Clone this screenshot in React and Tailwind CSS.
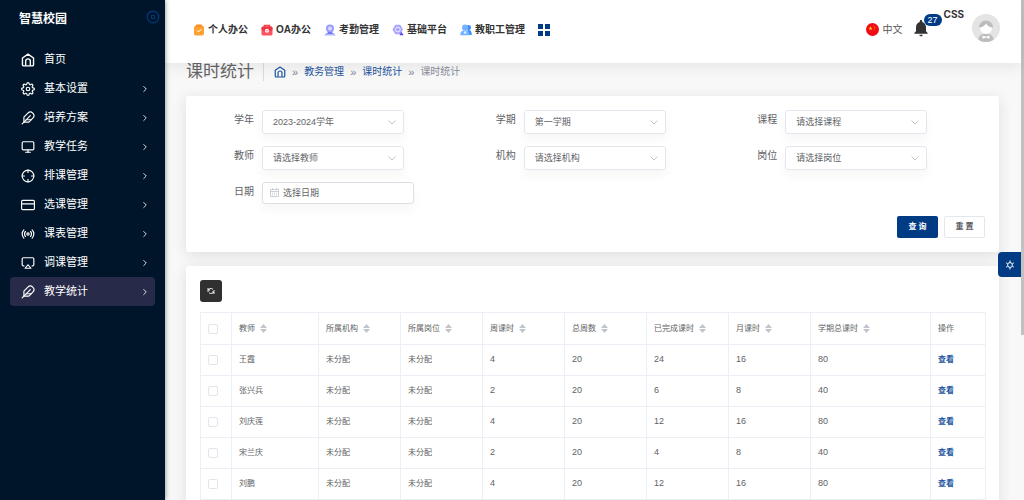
import {
  FiAirplay,
  FiChevronRight,
  FiCreditCard,
  FiCrosshair,
  FiDisc,
  FiFeather,
  FiMonitor,
  FiRadio,
  FiSettings,
} from "react-icons/fi";
import { MdNotifications } from "react-icons/md";

function HomeIcon({ className }) {
  return (
    <svg
      viewBox="0 0 24 24"
      fill="none"
      stroke="currentColor"
      strokeWidth="2.4"
      strokeLinejoin="round"
      className={className}
      aria-hidden="true"
    >
      <path d="M2.5 8.5 12 2l9.5 6.5V20a2 2 0 0 1-2 2h-15a2 2 0 0 1-2-2z" />
      <path d="M8 22v-8a4 4 0 0 1 8 0v8" />
    </svg>
  );
}

function TaskIcon() {
  return (
    <svg viewBox="0 0 12 12" className="h-3 w-3" aria-hidden="true">
      <rect x="1" y="1.5" width="10" height="10" rx="2" fill="#ffa033" />
      <rect x="3" y="0.5" width="6" height="2" rx="1" fill="#f78a1d" />
      <path d="m4 6.5 1.5 1.5L8.5 5" fill="none" stroke="#fff" strokeWidth="1" />
    </svg>
  );
}

function OaIcon() {
  return (
    <svg viewBox="0 0 12 12" className="h-3 w-3" aria-hidden="true">
      <path d="M3.5 3V1.5h5V3" fill="none" stroke="#f5414c" strokeWidth="1.5" />
      <rect x="0.5" y="2.5" width="11" height="9" rx="1.5" fill="#fb5560" />
      <rect x="0.5" y="2.5" width="11" height="4" rx="1.5" fill="#f03542" />
      <circle cx="6" cy="6.8" r="2" fill="#fff" />
      <circle cx="6" cy="6.8" r="0.7" fill="#fb5560" />
    </svg>
  );
}

function AttendanceIcon() {
  return (
    <svg viewBox="0 0 12 12" className="h-3 w-3" aria-hidden="true">
      <circle cx="6" cy="4.5" r="4" fill="#9a9cfb" />
      <circle cx="6" cy="4.5" r="2" fill="#d9daff" />
      <path d="M0.5 11.5c0-2 2-3 5.5-3s5.5 1 5.5 3z" fill="#b4b5fd" />
      <path d="M4 8h4l1 2H3z" fill="#7476f5" />
    </svg>
  );
}

function PlatformIcon() {
  return (
    <svg viewBox="0 0 12 12" className="h-3 w-3" aria-hidden="true">
      <path d="M3.3 0.8h5L11 5.5l-2.7 4.7h-5L0.5 5.500z" fill="#a9a5fc" />
      <circle cx="5.8" cy="5.5" r="2.4" fill="#a9a5fc" stroke="#fff" strokeWidth="0.8" />
      <path d="M7.500 11.300 9.300 7.800l2.400 3.500z" fill="#5a45f0" />
    </svg>
  );
}

function StaffIcon() {
  return (
    <svg viewBox="0 0 12 12" className="h-3 w-3" aria-hidden="true">
      <circle cx="8.5" cy="3.5" r="2.5" fill="#3f8cff" />
      <path d="M6 11c0-3 1-5 3-5s2.800 2 2.800 5z" fill="#3f8cff" />
      <circle cx="5" cy="3.5" r="3" fill="#74b5ff" />
      <path d="M0.2 11.2c0-3.500 1.800-5 4.800-5s4.500 1.500 4.500 5z" fill="#74b5ff" />
      <circle cx="5" cy="8.5" r="1.2" fill="#e3f0ff" />
    </svg>
  );
}

function FlagIcon() {
  return (
    <svg viewBox="0 0 13 13" className="h-[13px] w-[13px]" aria-hidden="true">
      <circle cx="6.5" cy="6.5" r="6.5" fill="#ee0a16" />
      <path
        d="m4.500 3.200.6 1.500h1.500l-1.200 1 .5 1.500-1.400-.9-1.400.9.500-1.500-1.200-1h1.500z"
        fill="#ffd500"
      />
      <path
        d="M7.500 2.800c1.600.7 1.900 3.200 0 4.400"
        fill="none"
        stroke="#f9a800"
        strokeWidth="0.8"
        strokeDasharray="1 .6"
      />
    </svg>
  );
}

function AvatarIcon() {
  return (
    <svg viewBox="0 0 28 28" className="h-7 w-7" aria-hidden="true">
      <circle cx="14" cy="14" r="14" fill="#e4e4e4" />
      <path d="M6.500 25.800c0-4 3-6.300 7.500-6.300s7.500 2.300 7.500 6.300a14 14 0 0 1-15 0z" fill="#bdbdbd" />
      <circle cx="14" cy="14" r="6" fill="#fff" />
      <path d="M7 13.500a7 7 0 0 1 14 0c-3 0-5.500-1.500-7-4-1.500 2.500-4 4-7 4z" fill="#bdbdbd" />
      <path d="m10.500 21.500 3.500 1.200 3.500-1.200v3.200L14 23.500l-3.500 1.200z" fill="#fff" />
    </svg>
  );
}

function SortIcon() {
  return (
    <svg viewBox="0 0 7 9" className="h-[9px] w-[7px]" fill="#c0c4cc" aria-hidden="true">
      <path d="M3.500 0 7 4H0zM3.500 9 0 5h7z" />
    </svg>
  );
}

function DownIcon() {
  return (
    <svg
      viewBox="0 0 8 8"
      fill="none"
      stroke="#c0c4cc"
      className="pointer-events-none absolute top-2 right-2 h-2 w-2"
      aria-hidden="true"
    >
      <path d="m0.500 2.500 3.500 3.500 3.500-3.500" />
    </svg>
  );
}

const menu = [
  { label: "首页", icon: HomeIcon },
  { label: "基本设置", icon: FiSettings, more: true },
  { label: "培养方案", icon: FiFeather, more: true },
  { label: "教学任务", icon: FiMonitor, more: true },
  { label: "排课管理", icon: FiCrosshair, more: true },
  { label: "选课管理", icon: FiCreditCard, more: true },
  { label: "课表管理", icon: FiRadio, more: true },
  { label: "调课管理", icon: FiAirplay, more: true },
  { label: "教学统计", icon: FiFeather, more: true, active: true },
];

const topNav = [
  { label: "个人办公", icon: TaskIcon },
  { label: "OA办公", icon: OaIcon },
  { label: "考勤管理", icon: AttendanceIcon },
  { label: "基础平台", icon: PlatformIcon },
  { label: "教职工管理", icon: StaffIcon },
];

const filters = [
  { id: "year", label: "学年", value: "2023-2024学年" },
  { id: "term", label: "学期", value: "第一学期" },
  { id: "course", label: "课程", value: "请选择课程" },
  { id: "teacher", label: "教师", value: "请选择教师" },
  { id: "org", label: "机构", value: "请选择机构" },
  { id: "post", label: "岗位", value: "请选择岗位" },
];

const columns = [
  "教师",
  "所属机构",
  "所属岗位",
  "周课时",
  "总周数",
  "已完成课时",
  "月课时",
  "学期总课时",
];

const rows = [
  ["王霞", "未分配", "未分配", 4, 20, 24, 16, 80],
  ["张兴兵", "未分配", "未分配", 2, 20, 6, 8, 40],
  ["刘庆莲", "未分配", "未分配", 4, 20, 12, 16, 80],
  ["宋兰庆", "未分配", "未分配", 2, 20, 4, 8, 40],
  ["刘鹏", "未分配", "未分配", 4, 20, 12, 16, 80],
];

function Sidebar() {
  return (
    <aside className="z-30 w-[165px] shrink-0 bg-[#001529] text-white shadow-[0_0_5px_rgba(0,21,41,0.5)]">
      <div className="flex h-[38px] items-center justify-between pr-[5px] pl-[19px]">
        <span className="text-[12px] font-bold">智慧校园</span>
        <button type="button" aria-label="收起菜单" className="pb-1 text-[#003b84]">
          <FiDisc className="h-[14px] w-[14px]" />
        </button>
      </div>
      <nav className="px-[10px] pt-[7px]">
        {menu.map(({ label, icon: Icon, more, active }) => (
          <a
            key={label}
            href="#"
            className={`flex h-[29px] items-center gap-[9px] rounded pr-[5px] pl-[11px] text-[11px] ${
              active ? "bg-[#282a4a]" : ""
            }`}
          >
            <Icon className="h-[14px] w-[14px]" />
            <span className="flex-1">{label}</span>
            {more && <FiChevronRight className="h-[10px] w-[10px]" />}
          </a>
        ))}
      </nav>
    </aside>
  );
}

function Header() {
  return (
    <header className="z-20 flex h-[63px] shrink-0 items-center justify-between bg-white pr-[21px] pb-1 pl-7 shadow-[0_4px_14px_rgba(0,0,0,0.08)]">
      <nav className="flex items-center gap-[13px]">
        {topNav.map(({ label, icon: Icon }) => (
          <a
            key={label}
            href="#"
            className="flex items-center gap-[3px] text-[10px] font-bold text-[#333]"
          >
            <Icon />
            {label}
          </a>
        ))}
        <button type="button" aria-label="全部应用" className="text-[#003b84]">
          <svg viewBox="0 0 12 12" className="h-3 w-3" fill="currentColor">
            <path d="M0 0h5v5H0zM7 0h5v5H7zM0 7h5v5H0zM7 7h5v5H7z" />
          </svg>
        </button>
      </nav>
      <div className="flex items-center">
        <button type="button" className="flex items-center gap-1 text-[10px] text-[#555]">
          <FlagIcon />
          中文
        </button>
        <button type="button" aria-label="通知" className="relative mb-1 ml-2 text-[#333]">
          <MdNotifications className="h-5 w-5" />
          <span className="absolute -top-1 left-[13px] rounded-full bg-[#003b84] px-1 text-[9px] leading-3 text-white">
            27
          </span>
        </button>
        <span className="mb-8 ml-[13px] font-['Inter',sans-serif] text-[10px] leading-3 font-bold text-[#333]">
          CSS
        </span>
        <button type="button" aria-label="个人中心" className="mb-1 ml-2">
          <AvatarIcon />
        </button>
      </div>
    </header>
  );
}

function Breadcrumb() {
  return (
    <div className="flex items-center pb-[15px] leading-[18px]">
      <h1 className="text-[17px] text-[#666]">课时统计</h1>
      <nav className="ml-[9px] flex items-center gap-[6px] border-l border-[#d6dce1] pl-[10px] text-[10px] text-[#1d56a0]">
        <a href="#" aria-label="首页">
          <HomeIcon className="h-3 w-3" />
        </a>
        <span className="text-[11px] text-[#7d8594]">»</span>
        <a href="#">教务管理</a>
        <span className="text-[11px] text-[#7d8594]">»</span>
        <a href="#">课时统计</a>
        <span className="text-[11px] text-[#7d8594]">»</span>
        <span className="text-[#8a8f9c]">课时统计</span>
      </nav>
    </div>
  );
}

function FilterForm() {
  return (
    <form className="rounded-[3px] bg-white p-[14px] shadow-[0_3px_14px_rgba(34,41,60,0.12)]">
      <div className="grid grid-cols-3 gap-y-3 text-[#606266]">
        {filters.map((item) => (
          <div key={item.id} className="flex gap-2">
            <label htmlFor={item.id} className="w-[54px] text-right text-[10px] leading-5">
              {item.label}
            </label>
            <div className="relative w-[142px]">
              <select
                id={item.id}
                className="block h-6 w-full appearance-none rounded-[3px] border border-[#e4e7ed] bg-white pt-px pl-[10px] text-[9px] shadow-[0_6px_10px_rgba(60,40,60,0.04)]"
              >
                <option>{item.value}</option>
              </select>
              <DownIcon />
            </div>
          </div>
        ))}
        <div className="flex gap-2">
          <label htmlFor="date" className="w-[54px] text-right text-[10px] leading-5">
            日期
          </label>
          <div className="relative w-[152px]">
            <input
              id="date"
              type="text"
              placeholder="选择日期"
              className="block h-[22px] w-full rounded-[3px] border border-[#dcdfe6] bg-white pl-5 text-[9px] shadow-[0_6px_10px_rgba(60,40,60,0.04)] placeholder:text-[#606266]"
            />
            <svg
              viewBox="0 0 9 9"
              fill="none"
              stroke="#c0c4cc"
              strokeWidth="0.8"
              className="pointer-events-none absolute top-[6px] left-2 h-[9px] w-[9px]"
              aria-hidden="true"
            >
              <path d="M0.500 1.500h8v7h-8zM0.500 3.500h8M2.500 0v2M6.500 0v2M2 5.300h1M4 5.300h1M6 5.300h1M2 7h1M4 7h1M6 7h1" />
            </svg>
          </div>
        </div>
      </div>
      <div className="mt-3 flex justify-end gap-[6px] text-[8px] font-bold">
        <button type="submit" className="h-[22px] w-[41px] rounded-xs bg-[#003b84] text-white">
          查 询
        </button>
        <button
          type="reset"
          className="h-[22px] w-[41px] rounded-xs border border-[#e4e7ed] bg-white text-[#606266]"
        >
          重 置
        </button>
      </div>
    </form>
  );
}

function HoursTable() {
  return (
    <section className="rounded-[3px] bg-white p-[14px] shadow-[0_3px_14px_rgba(34,41,60,0.12)]">
      <button
        type="button"
        aria-label="刷新"
        className="mb-[10px] flex h-[22px] w-[22px] items-center justify-center rounded-[3px] bg-[#303030] text-white"
      >
        <svg
          viewBox="0 0 8 8"
          className="h-2 w-2"
          fill="none"
          stroke="currentColor"
          strokeWidth="0.9"
          aria-hidden="true"
        >
          <path d="M1 5V3.500a3 2.500 0 0 1 5-1.300M7 3v1.500a3 2.500 0 0 1-5 1.300" />
          <path d="M1 1v2h2M7 7V5H5" />
        </svg>
      </button>
      <table className="w-full table-fixed border-collapse text-left text-[8px] text-[#606266]">
        <colgroup>
          <col className="w-[31px]" />
          <col className="w-[87px]" />
          <col className="w-[82px]" />
          <col className="w-[82px]" />
          <col className="w-[82px]" />
          <col className="w-[82px]" />
          <col className="w-[82px]" />
          <col className="w-[82px]" />
          <col className="w-[120px]" />
          <col className="w-[55px]" />
        </colgroup>
        <thead>
          <tr className="h-8">
            <th className="border border-[#eceff6] pl-[7px]">
              <input
                type="checkbox"
                aria-label="全选"
                className="block h-[10px] w-[10px] appearance-none rounded-xs border border-[#e2e5eb]"
              />
            </th>
            {columns.map((name) => (
              <th key={name} className="border border-[#eceff6] px-[7px] font-normal">
                <span className="flex items-center gap-[5px]">
                  {name}
                  <SortIcon />
                </span>
              </th>
            ))}
            <th className="border border-[#eceff6] px-[7px] font-normal">操作</th>
          </tr>
        </thead>
        <tbody>
          {rows.map((row) => (
            <tr key={row[0]} className="h-[31px]">
              <td className="border border-[#eceff6] pl-[7px]">
                <input
                  type="checkbox"
                  aria-label={row[0]}
                  className="block h-[10px] w-[10px] appearance-none rounded-xs border border-[#e2e5eb]"
                />
              </td>
              {row.map((cell, i) => (
                <td
                  key={columns[i]}
                  className={`border border-[#eceff6] px-[7px] ${i > 2 ? "text-[9px]" : ""}`}
                >
                  {cell}
                </td>
              ))}
              <td className="border border-[#eceff6] px-[7px]">
                <a href="#" className="font-bold text-[#1d56a0]">
                  查看
                </a>
              </td>
            </tr>
          ))}
        </tbody>
      </table>
    </section>
  );
}

function App() {
  return (
    <div className="flex h-screen overflow-hidden bg-[#f8f8f8] font-['Liberation_Sans','Noto_Sans_CJK_SC',sans-serif]">
      <Sidebar />
      <div className="flex min-w-0 flex-1 flex-col">
        <Header />
        <main className="flex flex-1 flex-col overflow-y-auto pr-[22px] pl-[21px] [scrollbar-width:none]">
          <Breadcrumb />
          <div className="flex flex-col gap-[14px]">
            <FilterForm />
            <HoursTable />
          </div>
        </main>
      </div>
      <div className="w-[3px] shrink-0 bg-[#f8f8f8]">
        <div className="h-[67%] bg-[#c1c1c1]" />
      </div>
      <button
        type="button"
        aria-label="主题设置"
        className="fixed top-[252px] right-[3px] z-30 flex h-[25px] w-[23px] items-center justify-center rounded-l bg-[#003b84] text-white"
      >
        <svg viewBox="0 0 10 10" className="h-[10px] w-[10px]" fill="none" stroke="currentColor">
          <circle cx="5" cy="5" r="2.4" />
          <path d="M5 0.500v2M5 7.500v2M1.100 2.800l1.500.8M7.400 6.400l1.500.8M1.100 7.200l1.500-.8M7.400 3.600l1.500-.8" />
        </svg>
      </button>
    </div>
  );
}

export default App;
